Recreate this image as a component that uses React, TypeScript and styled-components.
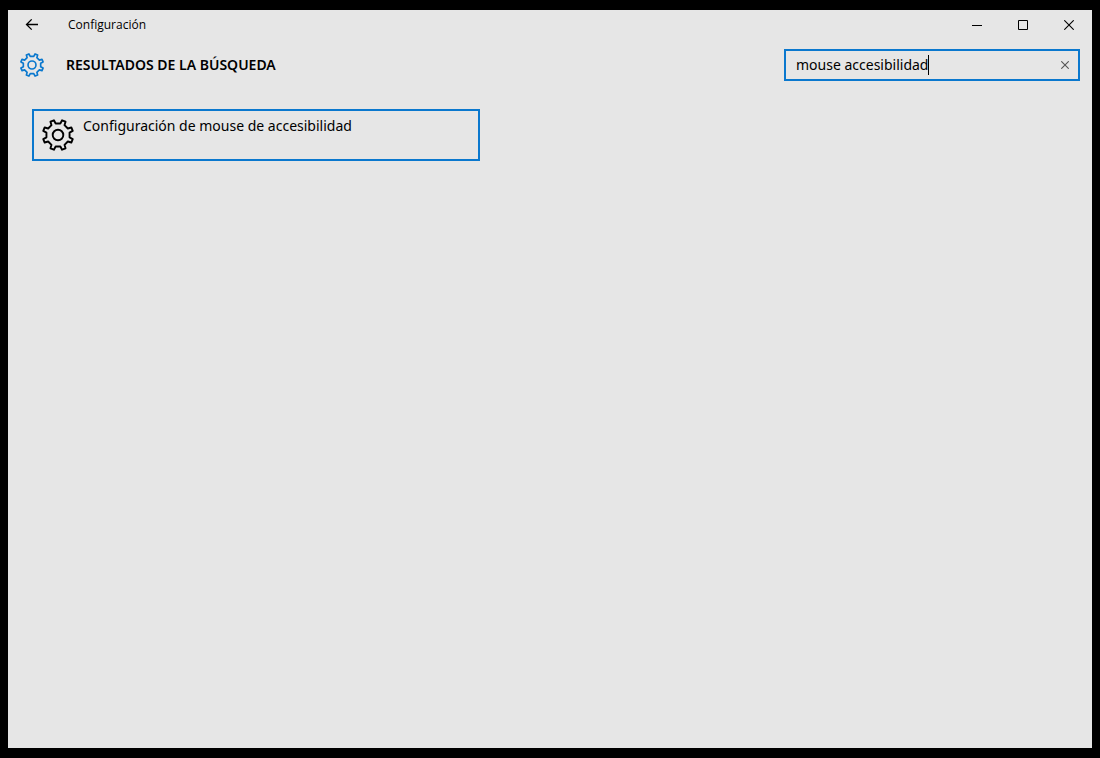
import React, { useState } from "react";
import styled, { createGlobalStyle } from "styled-components";

const accent = "#0a78ce";

const GlobalStyle = createGlobalStyle`
  *, *::before, *::after { box-sizing: border-box; }
  body {
    margin: 0;
    background: #000;
    color: #000;
    font-family: "Noto Sans", "Open Sans", sans-serif;
  }
  button, input { font: inherit; color: inherit; }
`;

const Desktop = styled.div`
  display: flex;
  min-height: 100vh;
  padding: 10px 8px;
`;

const Window = styled.div`
  flex: 1;
  min-width: 0;
  background: #e6e6e6;
`;

const TitleBar = styled.div`
  display: flex;
  align-items: center;
  height: 30px;
`;

const BarButton = styled.button<{ $width: number }>`
  display: flex;
  align-items: center;
  justify-content: center;
  width: ${(p) => p.$width}px;
  height: 30px;
  padding: 0;
  border: 0;
  background: transparent;
`;

const WindowTitle = styled.span`
  flex: 1;
  padding-left: 12px;
  font-family: "Open Sans", "Noto Sans", sans-serif;
  font-size: 12px;
  line-height: 16px;
`;

const Header = styled.header`
  display: flex;
  align-items: center;
  height: 50px;
  padding: 0 12px;
`;

const Heading = styled.h1`
  flex: 1;
  margin: 0;
  padding-left: 22px;
  font-size: 14px;
  font-weight: 600;
  line-height: 20px;
`;

const SearchBox = styled.div`
  display: flex;
  align-items: center;
  width: 296px;
  height: 32px;
  padding-left: 10px;
  border: 2px solid ${accent};
`;

const SearchInput = styled.input`
  field-sizing: content;
  max-width: 240px;
  padding: 0;
  border: 0;
  outline: 0;
  background: transparent;
  caret-color: transparent;
  font-size: 14px;
  line-height: 20px;
`;

const Caret = styled.span`
  width: 1px;
  height: 20px;
  background: #000;
`;

const ClearButton = styled.button`
  display: flex;
  align-items: center;
  justify-content: center;
  width: 26px;
  height: 28px;
  margin-left: auto;
  padding: 0;
  border: 0;
  background: transparent;
`;

const Results = styled.ul`
  margin: 0;
  padding: 19px 24px;
  list-style: none;
`;

const Result = styled.button`
  display: flex;
  align-items: flex-start;
  gap: 9px;
  width: 448px;
  max-width: 100%;
  height: 52px;
  padding: 5px 8px;
  border: 2px solid ${accent};
  background: transparent;
  font-size: 14px;
  line-height: 20px;
  text-align: left;
`;

const ResultIcon = styled.span`
  display: flex;
  padding-top: 3px;
`;

const TEETH = 8;

function gearPath() {
  const at = (radius: number, degrees: number) => {
    const a = (degrees * Math.PI) / 180;
    return `${(16 + radius * Math.sin(a)).toFixed(2)} ${(16 - radius * Math.cos(a)).toFixed(2)}`;
  };
  let d = "";
  for (let i = 0; i < TEETH; i++) {
    const c = (180 + i * 360) / TEETH;
    d += `${i ? "L" : "M"}${at(11.8, c - 11)}L${at(15.3, c - 7)}L${at(15.3, c + 7)}L${at(11.8, c + 11)}`;
  }
  return d + "Z";
}

function Gear({ size, color, stroke }: { size: number; color: string; stroke: number }) {
  return (
    <svg width={size} height={size} viewBox="0 0 32 32" fill="none" stroke={color} strokeWidth={stroke} strokeLinejoin="round" aria-hidden="true">
      <path d={gearPath()} />
      <circle cx="16" cy="16" r="5.3" />
    </svg>
  );
}

function Cross({ size, color }: { size: number; color: string }) {
  return (
    <svg width={size} height={size} viewBox={`0 0 ${size} ${size}`} stroke={color} strokeWidth="1.1" aria-hidden="true">
      <path d={`M0.3 0.3L${size - 0.3} ${size - 0.3}M${size - 0.3} 0.3L0.3 ${size - 0.3}`} />
    </svg>
  );
}

export default function App() {
  const [query, setQuery] = useState("mouse accesibilidad");
  return (
    <>
      <GlobalStyle />
      <Desktop>
        <Window>
          <TitleBar>
            <BarButton $width={48} aria-label="Atrás">
              <svg width="14" height="12" viewBox="0 0 14 12" fill="none" stroke="#000" strokeWidth="1.3" aria-hidden="true">
                <path d="M1.5 5.5H13M6.7 0.4L1.5 5.5L6.7 10.6" />
              </svg>
            </BarButton>
            <WindowTitle>Configuración</WindowTitle>
            <BarButton $width={46} aria-label="Minimizar">
              <svg width="10" height="10" viewBox="0 0 10 10" aria-hidden="true">
                <path d="M0 5H10V6H0Z" />
              </svg>
            </BarButton>
            <BarButton $width={46} aria-label="Maximizar">
              <svg width="10" height="10" viewBox="0 0 10 10" fill="none" stroke="#000" aria-hidden="true">
                <path d="M0.5 0.5H9.5V9.5H0.5Z" />
              </svg>
            </BarButton>
            <BarButton $width={46} aria-label="Cerrar">
              <Cross size={10} color="#000" />
            </BarButton>
          </TitleBar>
          <Header>
            <Gear size={24} color={accent} stroke={2.2} />
            <Heading>RESULTADOS DE LA BÚSQUEDA</Heading>
            <SearchBox>
              <SearchInput aria-label="Buscar una configuración" value={query} onChange={(e) => setQuery(e.target.value)} />
              <Caret />
              <ClearButton aria-label="Borrar" onClick={() => setQuery("")}>
                <Cross size={8} color="#555" />
              </ClearButton>
            </SearchBox>
          </Header>
          <Results>
            <li>
              <Result>
                <ResultIcon>
                  <Gear size={32} color="#000" stroke={1.9} />
                </ResultIcon>
                Configuración de mouse de accesibilidad
              </Result>
            </li>
          </Results>
        </Window>
      </Desktop>
    </>
  );
}
